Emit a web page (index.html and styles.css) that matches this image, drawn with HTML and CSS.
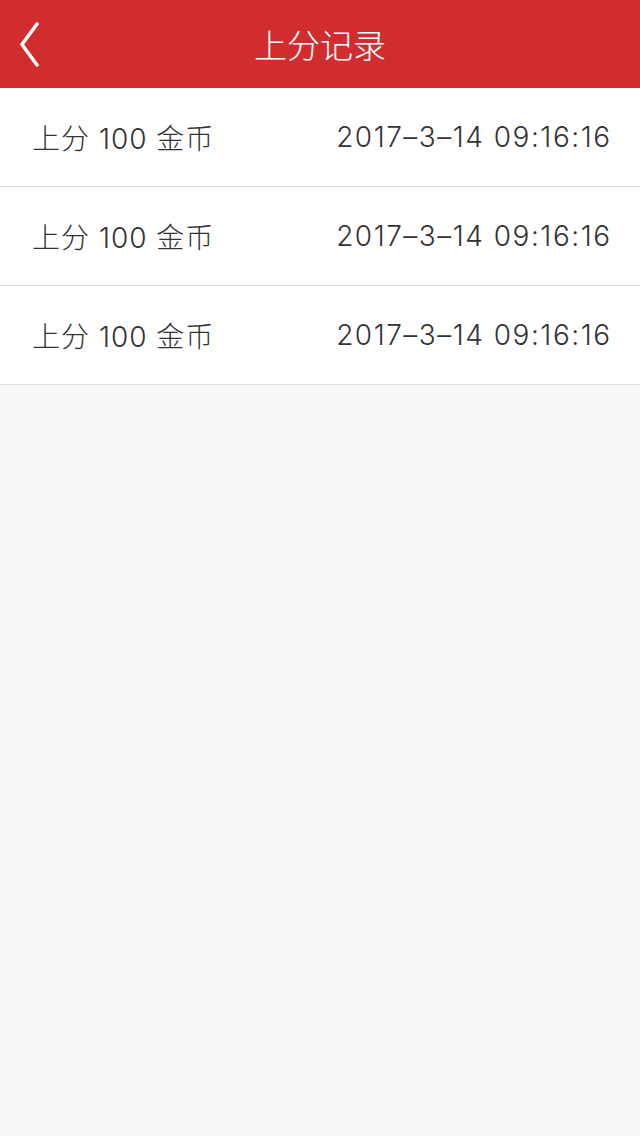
FILE: index.html
```html
<!DOCTYPE html>
<html lang="zh-CN">
<head>
<meta charset="utf-8">
<title>上分记录</title>
<link rel="stylesheet" href="styles.css">
</head>
<body>
<header class="topbar">
  <button class="back" aria-label="返回">
    <svg width="30" height="46" viewBox="0 0 30 46"><polyline points="18,2 3,22.5 18,43" fill="none" stroke="#fff" stroke-width="3.5" stroke-linecap="round" stroke-linejoin="round"/></svg>
  </button>
  <h1 class="title">上分记录</h1>
</header>
<ul class="list">
  <li class="row"><span class="amount">上分 100 金币</span><span class="time">2017–3–14 09:16:16</span></li>
  <li class="row"><span class="amount">上分 100 金币</span><span class="time">2017–3–14 09:16:16</span></li>
  <li class="row"><span class="amount">上分 100 金币</span><span class="time">2017–3–14 09:16:16</span></li>
</ul>
</body>
</html>
```
FILE: styles.css
```css
html, body {
  margin: 0;
  padding: 0;
  background: #f8f8f8;
  font-family: "Inter", "Noto Sans CJK SC", sans-serif;
}
.topbar {
  height: 88px;
  background: #d12d2f;
  display: flex;
  align-items: center;
  justify-content: center;
  position: relative;
}
.back {
  position: absolute;
  left: 19px;
  top: 22px;
  border: 0;
  background: none;
  padding: 0;
  width: 30px;
  height: 46px;
  display: flex;
}
.title {
  margin: 0;
  color: #fff;
  font-size: 33px;
  font-weight: 300;
  font-family: "Noto Sans CJK SC", sans-serif;
}
.list {
  list-style: none;
  margin: 0;
  padding: 0;
  background: #fff;
}
.row {
  height: 98px;
  border-bottom: 1px solid #dcdcdc;
  display: flex;
  align-items: center;
  justify-content: space-between;
  padding: 0 30px 0 32px;
  color: #333;
  font-size: 28px;
  font-weight: 300;
}
.amount {
  letter-spacing: 1px;
}
.time {
  letter-spacing: 1.5px;
  margin-right: -1.5px;
}
```
